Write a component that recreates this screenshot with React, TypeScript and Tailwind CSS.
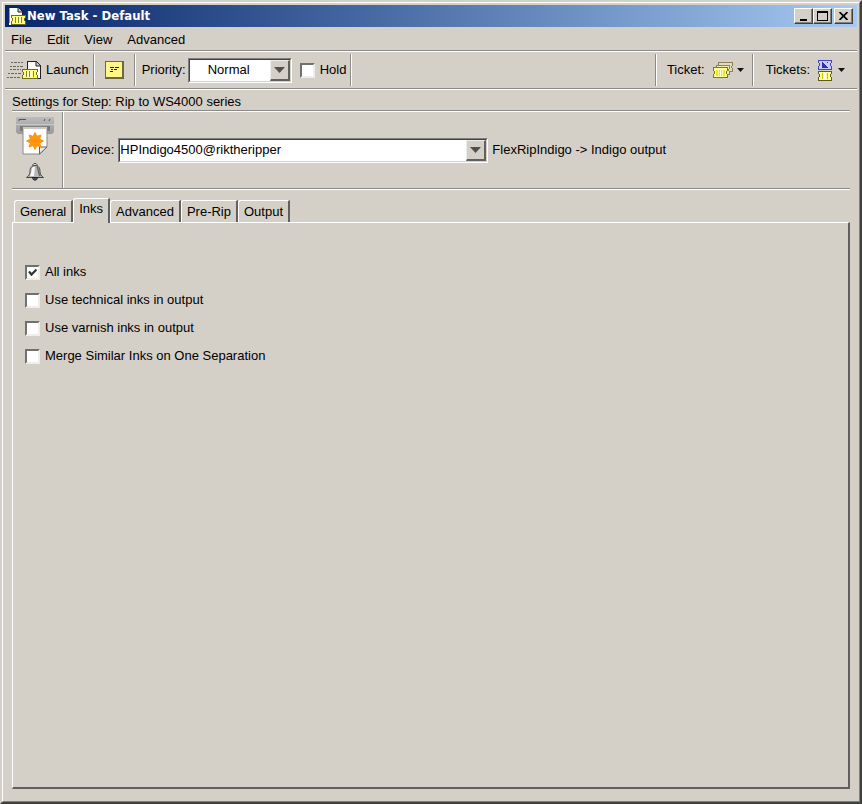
import { useState } from "react";

const STEP_TABS = ["General", "Inks", "Advanced", "Pre-Rip", "Output"];

const INK_OPTIONS = [
  { id: "all-inks", label: "All inks", checked: true },
  { id: "technical-inks", label: "Use technical inks in output", checked: false },
  { id: "varnish-inks", label: "Use varnish inks in output", checked: false },
  { id: "merge-inks", label: "Merge Similar Inks on One Separation", checked: false },
];

function TicketPageIcon({ className }: { className?: string }) {
  return (
    <svg viewBox="0 0 20 20" className={className} shapeRendering="crispEdges">
      <path d="M2 1h9l5 5v13H2z" fill="#fff" />
      <path d="M2.500 17V1.500" stroke="#999" />
      <path d="M2 1.500h9M15.500 6v5" fill="none" stroke="#222" />
      <path d="M11 1v5h5z" fill="#ccc" stroke="#222" shapeRendering="auto" />
      <path d="M4 9h15v3h-1v3h1v4H4v-4h1v-3H4z" fill="#6e6a1e" />
      <path d="M5 10h13v2h-1v3h1v3H5v-3h1v-3H5z" fill="#ffff78" />
      <path d="M10 11h4v6h-4z" fill="#ffffc8" />
      <path d="M8 11h1v6H8zM11 11h1v6h-1zM14 11h1v6h-1z" fill="#8a8420" />
    </svg>
  );
}

function LaunchIcon() {
  return (
    <svg viewBox="0 0 35 20" className="h-5 w-[35px]" shapeRendering="crispEdges">
      <path d="M4 2.500h12M3 6.500h13M3 9.500h11M1 13.500h13M0 17.500h13" stroke="#666" strokeDasharray="2 1 3 1" />
      <path d="M20 1h9l5 5v13H20z" fill="#fff" />
      <path d="M20.500 9V1.500H29M33.500 6v12.500H31" fill="none" stroke="#222" />
      <path d="M29 1v5h5z" fill="#ccc" stroke="#222" shapeRendering="auto" />
      <path d="M15 9h16v3h-1v3h1v4H15v-4h1v-3h-1z" fill="#6e6a1e" />
      <path d="M16 10h14v2h-1v3h1v3H16v-3h1v-3h-1z" fill="#ffff78" />
      <path d="M21 11h4v6h-4z" fill="#ffffc8" />
      <path d="M19 11h1v6h-1zM22 11h1v6h-1zM26 11h1v6h-1z" fill="#8a8420" />
    </svg>
  );
}

function NoteIcon() {
  return (
    <svg viewBox="0 0 19 18" className="h-[18px] w-[19px]" shapeRendering="crispEdges">
      <path d="M0 0h19v18H0z" fill="#6c6840" />
      <path d="M1 1h16v15H1z" fill="#fff58a" />
      <path d="M5 6.500h4M10 6.500h4M6 8.500h2M9 8.500h3M5 10.500h3" stroke="#222" />
    </svg>
  );
}

function TicketStackIcon() {
  return (
    <svg viewBox="0 0 20 18" className="h-[18px] w-5" shapeRendering="crispEdges">
      <path d="M5 1h15v3l-1 1v2l1 1v3H5z" fill="#8c7f5a" />
      <path d="M6 2h13v2l-1 1v2l1 1v2H6z" fill="#e4deb8" />
      <path d="M3 4h14v3l-1 1v2l1 1v3H3z" fill="#8c7f5a" />
      <path d="M4 5h12v2l-1 1v2l1 1v2H4z" fill="#f0ecb8" />
      <path d="M0 6h15v4h-1v3h1v4H0v-4h1v-3H0z" fill="#857428" />
      <path d="M1 7h13v3h-1v3h1v3H1v-3h1v-3H1z" fill="#ffffa0" />
      <path d="M3 9h2v6H3zM6 9h3v6H6zM10 9h2v6h-2z" fill="#f0e818" />
      <path d="M7 9h1v6H7z" fill="#fff" />
    </svg>
  );
}

function TicketPairIcon() {
  return (
    <svg viewBox="0 0 14 21" className="h-[21px] w-3.5" shapeRendering="crispEdges">
      <path d="M0 0h14v3h-1v3h1v4H0V6h1V3H0z" fill="#4444b8" />
      <path d="M1 1h12v2h-1v3h1v3H1V6h1V3H1z" fill="#c8ccff" />
      <path d="M4 2l6 6H4zM8 2h2v2z" fill="#3030a8" />
      <path d="M0 11h14v3h-1v3h1v4H0v-4h1v-3H0z" fill="#605c18" />
      <path d="M1 12h12v2h-1v3h1v3H1v-3h1v-3H1z" fill="#ffff90" />
      <path d="M4 13h1v6H4zM9 13h1v6H9z" fill="#c8c010" />
      <path d="M6 13h2v6H6z" fill="#fff" />
    </svg>
  );
}

function PrinterIcon() {
  return (
    <svg viewBox="0 0 38 39" className="h-[39px] w-[38px]">
      <defs>
        <linearGradient id="printer-body" x2="0" y2="1">
          <stop offset="0" stopColor="#bcbcbc" />
          <stop offset="1" stopColor="#9a9a9a" />
        </linearGradient>
      </defs>
      <path d="M0 1h38v15l-2 2H2l-2-2z" fill="url(#printer-body)" />
      <path d="M0 8.500h38" stroke="#c8c8c8" />
      <path d="M3 5V3.500h7M28 5l1-2M33 5l1-2" fill="none" stroke="#555" />
      <path d="M4 10h30v5H4z" fill="#787878" />
      <path d="M7 11h24v20l-7 7H7z" fill="#fff" stroke="#8a8a8a" />
      <path d="M7 11h24v2H7z" fill="#c8c8c8" />
      <path d="M23.500 38V31H31z" fill="#e8e8e8" stroke="#666" />
      <path
        d="M19 16.500L20.900 20.400 25 19 23.600 23.100 27.500 25 23.600 26.900 25 31 20.900 29.600 19 33.500 17.100 29.600 13 31 14.400 26.900 10.500 25 14.400 23.100 13 19 17.100 20.400z"
        fill="#ff9410"
        stroke="#ff9410"
      />
    </svg>
  );
}

function BellIcon() {
  return (
    <svg viewBox="0 0 18 18" className="h-[18px] w-[18px]">
      <path d="M7 3.500V1.500l1-1h2l1 1v2" fill="#ddd" stroke="#444" />
      <path d="M9 2.500C5 2.500 4 5.500 4 8.500c0 2.500-1 4.500-3.500 6h17c-2.500-1.500-3.500-3.500-3.500-6 0-3-1-6-5-6z" fill="#b8b8b8" stroke="#444" />
      <path d="M7 4C5 6 6 9 4 13h4l1-9z" fill="#f8f8f8" />
      <path d="M11 4c2 2 1 6 3 9" fill="none" stroke="#666" strokeWidth="1.500" />
      <path d="M6.500 14.500c0 3.500 5 3.500 5 0z" fill="#555" stroke="#222" />
    </svg>
  );
}

function Caret() {
  return (
    <svg viewBox="0 0 7 4" className="h-1 w-[7px]">
      <path d="M0 0h7L3.500 4z" fill="#111" />
    </svg>
  );
}

function Rule() {
  return <div className="h-0.5 border-t border-b border-t-[#8a8a8a] border-b-white" />;
}

function Separator() {
  return <div className="w-0.5 self-stretch border-r border-l border-r-white border-l-[#8a8a8a]" />;
}

type SelectProps = {
  id: string;
  value: string;
  className: string;
};

function Select({ id, value, className }: SelectProps) {
  return (
    <div className="relative border border-t-[#808080] border-r-white border-b-white border-l-[#808080]">
      <select
        id={id}
        defaultValue={value}
        className={`block h-[23px] appearance-none border border-t-[#404040] border-r-[#d4d0c8] border-b-[#d4d0c8] border-l-[#404040] bg-white text-black outline-none ${className}`}
      >
        <option>{value}</option>
      </select>
      <span className="pointer-events-none absolute top-px right-px bottom-px flex w-5 items-center justify-center border-t border-r-2 border-b-2 border-l border-t-[#f0eeea] border-r-[#606060] border-b-[#606060] border-l-[#f0eeea] bg-[#d4d0c8]">
        <svg viewBox="0 0 11 6" className="h-1.5 w-[11px]">
          <path d="M0 0h11L5.500 6z" fill="#505050" />
        </svg>
      </span>
    </div>
  );
}

type CheckboxProps = {
  id: string;
  label: string;
  defaultChecked?: boolean;
};

function Checkbox({ id, label, defaultChecked }: CheckboxProps) {
  return (
    <div className="flex items-center gap-[5px]">
      <span className="relative h-[15px] w-[15px]">
        <input
          id={id}
          type="checkbox"
          defaultChecked={defaultChecked}
          className="peer block h-[15px] w-[15px] appearance-none border-2 border-t-[#707070] border-r-[#f0eeea] border-b-[#f0eeea] border-l-[#707070] bg-white"
        />
        <svg viewBox="0 0 9 9" className="pointer-events-none absolute top-[3px] left-[3px] hidden h-[9px] w-[9px] peer-checked:block">
          <path d="M1 3.500L3.500 6.500 8.500 1.500" fill="none" stroke="#333" strokeWidth="2.200" />
        </svg>
      </span>
      <label htmlFor={id}>{label}</label>
    </div>
  );
}

function TitleBar() {
  const button =
    "flex h-4 items-center justify-center border border-t-white border-r-[#404040] border-b-[#404040] border-l-white bg-[#d4d0c8] shadow-[inset_-1px_-1px_#808080]";
  return (
    <header className="flex h-[22px] items-center bg-linear-to-r from-[#0a246a] to-[#a6caf0] pr-1 pl-0.5">
      <TicketPageIcon className="h-5 w-5" />
      <h1 className="flex-1 font-['DejaVu_Sans_Condensed','DejaVu_Sans',sans-serif] text-[13px] font-bold text-white">New Task - Default</h1>
      <button aria-label="Minimize" className={`w-[19px] ${button}`}>
        <svg viewBox="0 0 10 9" className="h-[9px] w-2.5">
          <path d="M1 7h7v2H1z" />
        </svg>
      </button>
      <button aria-label="Maximize" className={`w-[19px] ${button}`}>
        <svg viewBox="0 0 11 10" className="h-2.5 w-[11px]" shapeRendering="crispEdges">
          <path d="M0 0h11v10H0zM1 2v7h9V2z" fillRule="evenodd" />
        </svg>
      </button>
      <button aria-label="Close" className={`ml-0.5 w-[19px] ${button}`}>
        <svg viewBox="0 0 9 8" className="h-2 w-[9px]">
          <path d="M.5 0L8.500 8M8.500 0L.5 8" stroke="#000" strokeWidth="1.700" />
        </svg>
      </button>
    </header>
  );
}

function Toolbar() {
  return (
    <div className="flex h-9 items-center py-0.5 pl-0.5">
      <button className="flex items-center gap-1">
        <LaunchIcon />
        Launch
      </button>
      <div className="ml-1 flex self-stretch">
        <Separator />
      </div>
      <button aria-label="Notes" className="mx-2.5">
        <NoteIcon />
      </button>
      <Separator />
      <label htmlFor="priority" className="mr-0.5 ml-1.5">
        Priority:
      </label>
      <Select id="priority" value="Normal" className="w-[102px] pl-[18px]" />
      <div className="mr-1 ml-2">
        <Checkbox id="hold" label="Hold" />
      </div>
      <Separator />
      <div className="flex-1" />
      <Separator />
      <button className="mr-2 ml-2.5 flex items-center">
        Ticket:
        <span className="mr-1 ml-2">
          <TicketStackIcon />
        </span>
        <Caret />
      </button>
      <Separator />
      <button className="mr-3 ml-3 flex items-center">
        Tickets:
        <span className="mr-1.5 ml-2">
          <TicketPairIcon />
        </span>
        <Caret />
      </button>
    </div>
  );
}

export default function App() {
  const [tab, setTab] = useState("Inks");

  return (
    <div className="flex min-h-screen flex-col border-2 border-t-[#d4d0c8] border-r-[#404040] border-b-[#404040] border-l-[#d4d0c8] bg-[#d4d0c8] font-['Liberation_Sans',Arial,sans-serif] text-[13px] leading-4 text-black">
      <div className="flex flex-1 flex-col border border-t-white border-r-[#808080] border-b-[#808080] border-l-white p-0.5">
        <TitleBar />
        <nav className="flex h-[23px] items-center gap-[15px] pt-0.5 pl-1.5">
          <button>File</button>
          <button>Edit</button>
          <button>View</button>
          <button>Advanced</button>
        </nav>
        <Rule />
        <Toolbar />
        <Rule />

        <main className="flex flex-1 flex-col pt-1 pr-[7px] pb-2.5 pl-[7px]">
          <h2>Settings for Step: Rip to WS4000 series</h2>
          <Rule />
          <div className="flex h-[76px] items-stretch">
            <div className="flex w-[50px] flex-col items-center gap-2 pt-1 pr-1">
              <PrinterIcon />
              <BellIcon />
            </div>
            <Separator />
            <div className="flex items-center gap-1 pl-[7px]">
              <label htmlFor="device">Device:</label>
              <Select id="device" value="HPIndigo4500@riktheripper" className="w-[368px]" />
              <span>FlexRipIndigo -&gt; Indigo output</span>
            </div>
          </div>
          <Rule />

          <div role="tablist" className="mt-2 flex items-end pl-0.5">
            {STEP_TABS.map((name) => (
              <button
                key={name}
                role="tab"
                aria-selected={tab === name}
                onClick={() => setTab(name)}
                className={`rounded-tl-[3px] border-t border-r-2 border-l border-t-white border-r-[#606060] border-l-white px-[5px] ${
                  tab === name ? "relative -mb-px h-[25px] bg-[#d4d0c8] pb-1" : "h-[22px]"
                }`}
              >
                {name}
              </button>
            ))}
          </div>
          <section
            role="tabpanel"
            className="flex flex-1 flex-col gap-3 border-t border-r-2 border-b-2 border-l border-t-white border-r-[#606060] border-b-[#606060] border-l-white px-3 pt-[41px]"
          >
            {tab === "Inks" &&
              INK_OPTIONS.map((option) => (
                <Checkbox key={option.id} id={option.id} label={option.label} defaultChecked={option.checked} />
              ))}
          </section>
        </main>
      </div>
    </div>
  );
}
